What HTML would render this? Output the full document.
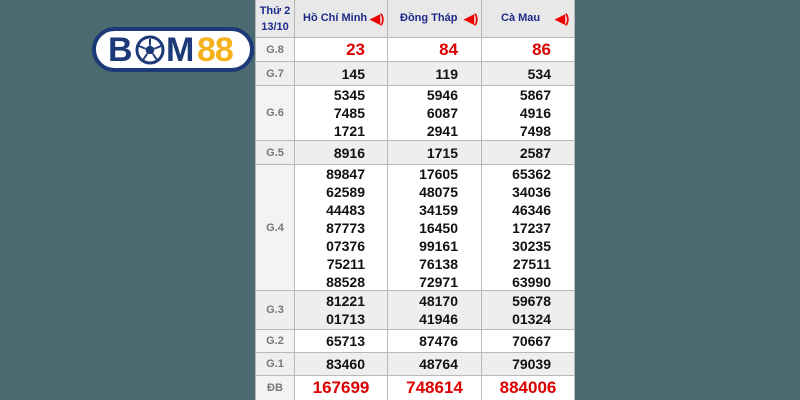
<!DOCTYPE html>
<html><head><meta charset="utf-8"><style>
*{margin:0;padding:0;box-sizing:border-box}
body{width:800px;height:400px;background:#4b6b71;position:relative;overflow:hidden;font-family:"Liberation Sans",Arial,sans-serif}
.logo{position:absolute;left:92px;top:27px;width:162px;height:45px;background:#fff;border:4px solid #1d3a78;border-radius:23px}
.logo span{position:absolute;top:1px;font-weight:900;font-size:34px;line-height:37px;letter-spacing:-1px}
.tb{position:absolute;left:255px;top:0;width:320px;height:400px;background:#fff;border-left:1px solid #b8b8b8;border-right:1px solid #b8b8b8}
.row{position:absolute;left:0;width:318px;border-bottom:1px solid #b8b8b8}
.row.g{background:#eeeeee}
.cell{position:absolute;top:0;height:100%;display:flex;flex-direction:column;justify-content:center;font-weight:bold;font-size:14px;color:#111;line-height:18px;text-align:right}
.l{left:0;width:39px;text-align:center;color:#777;font-size:11px;background:#f3f3f3;border-right:1px solid #b8b8b8}
.g .l{background:#eeeeee}
.c1{left:39px;width:93px;padding-right:22px;border-right:1px solid #b8b8b8}
.c2{left:132px;width:94px;padding-right:23px;border-right:1px solid #b8b8b8}
.c3{left:226px;width:92px;padding-right:23px}
.h{background:#e8e8e8}
.h .l{color:#1d2a8a;background:#e8e8e8;font-size:11px;line-height:16px}
.ht{position:absolute;top:12px;color:#1d2a8a;font-size:11px;font-weight:bold}
.sp{position:absolute;top:11px;color:#e00;font-size:13px;font-weight:bold}
.r{color:#d00;font-size:17px}
.db .c1,.db .c2,.db .c3{font-size:17px;color:#d00;text-align:center;padding-right:0}
</style></head><body>
<div class="logo">
<span style="left:12px;color:#1d3a78">B</span>
<svg style="position:absolute;left:39px;top:4px" width="30" height="30" viewBox="0 0 30 30"><circle cx="15" cy="15" r="13" fill="#fff" stroke="#1d3a78" stroke-width="3"/><polygon points="15,10 20,13.5 18,19 12,19 10,13.5" fill="#1d3a78"/><path d="M15 10V4M20 13.5L26 11M18 19L22 25M12 19L8 25M10 13.5L4 11" stroke="#1d3a78" stroke-width="2"/></svg>
<span style="left:70px;color:#1d3a78">M</span>
<span style="left:101px;color:#f5b21b">88</span>
</div>
<div class="tb">
<div class="row h" style="top:0;height:38px"><div class="cell l">Thứ 2<br>13/10</div><div class="cell c1"></div><div class="cell c2"></div></div>
<span class="ht" style="left:47px">Hồ Chí Minh</span><span class="sp" style="left:114px">◀)</span>
<span class="ht" style="left:144px">Đồng Tháp</span><span class="sp" style="left:208px">◀)</span>
<span class="ht" style="left:245px">Cà Mau</span><span class="sp" style="left:299px">◀)</span>
<div class="row" style="top:38px;height:24px"><div class="cell l">G.8</div><div class="cell c1 r">23</div><div class="cell c2 r">84</div><div class="cell c3 r">86</div></div>
<div class="row g" style="top:62px;height:24px"><div class="cell l">G.7</div><div class="cell c1">145</div><div class="cell c2">119</div><div class="cell c3">534</div></div>
<div class="row" style="top:86px;height:55px"><div class="cell l">G.6</div><div class="cell c1">5345<br>7485<br>1721</div><div class="cell c2">5946<br>6087<br>2941</div><div class="cell c3">5867<br>4916<br>7498</div></div>
<div class="row g" style="top:141px;height:24px"><div class="cell l">G.5</div><div class="cell c1">8916</div><div class="cell c2">1715</div><div class="cell c3">2587</div></div>
<div class="row" style="top:165px;height:126px"><div class="cell l">G.4</div><div class="cell c1">89847<br>62589<br>44483<br>87773<br>07376<br>75211<br>88528</div><div class="cell c2">17605<br>48075<br>34159<br>16450<br>99161<br>76138<br>72971</div><div class="cell c3">65362<br>34036<br>46346<br>17237<br>30235<br>27511<br>63990</div></div>
<div class="row g" style="top:291px;height:39px"><div class="cell l">G.3</div><div class="cell c1">81221<br>01713</div><div class="cell c2">48170<br>41946</div><div class="cell c3">59678<br>01324</div></div>
<div class="row" style="top:330px;height:23px"><div class="cell l">G.2</div><div class="cell c1">65713</div><div class="cell c2">87476</div><div class="cell c3">70667</div></div>
<div class="row g" style="top:353px;height:23px"><div class="cell l">G.1</div><div class="cell c1">83460</div><div class="cell c2">48764</div><div class="cell c3">79039</div></div>
<div class="row db" style="top:376px;height:24px;border-bottom:none"><div class="cell l">ĐB</div><div class="cell c1">167699</div><div class="cell c2">748614</div><div class="cell c3">884006</div></div>
</div>
</body></html>
